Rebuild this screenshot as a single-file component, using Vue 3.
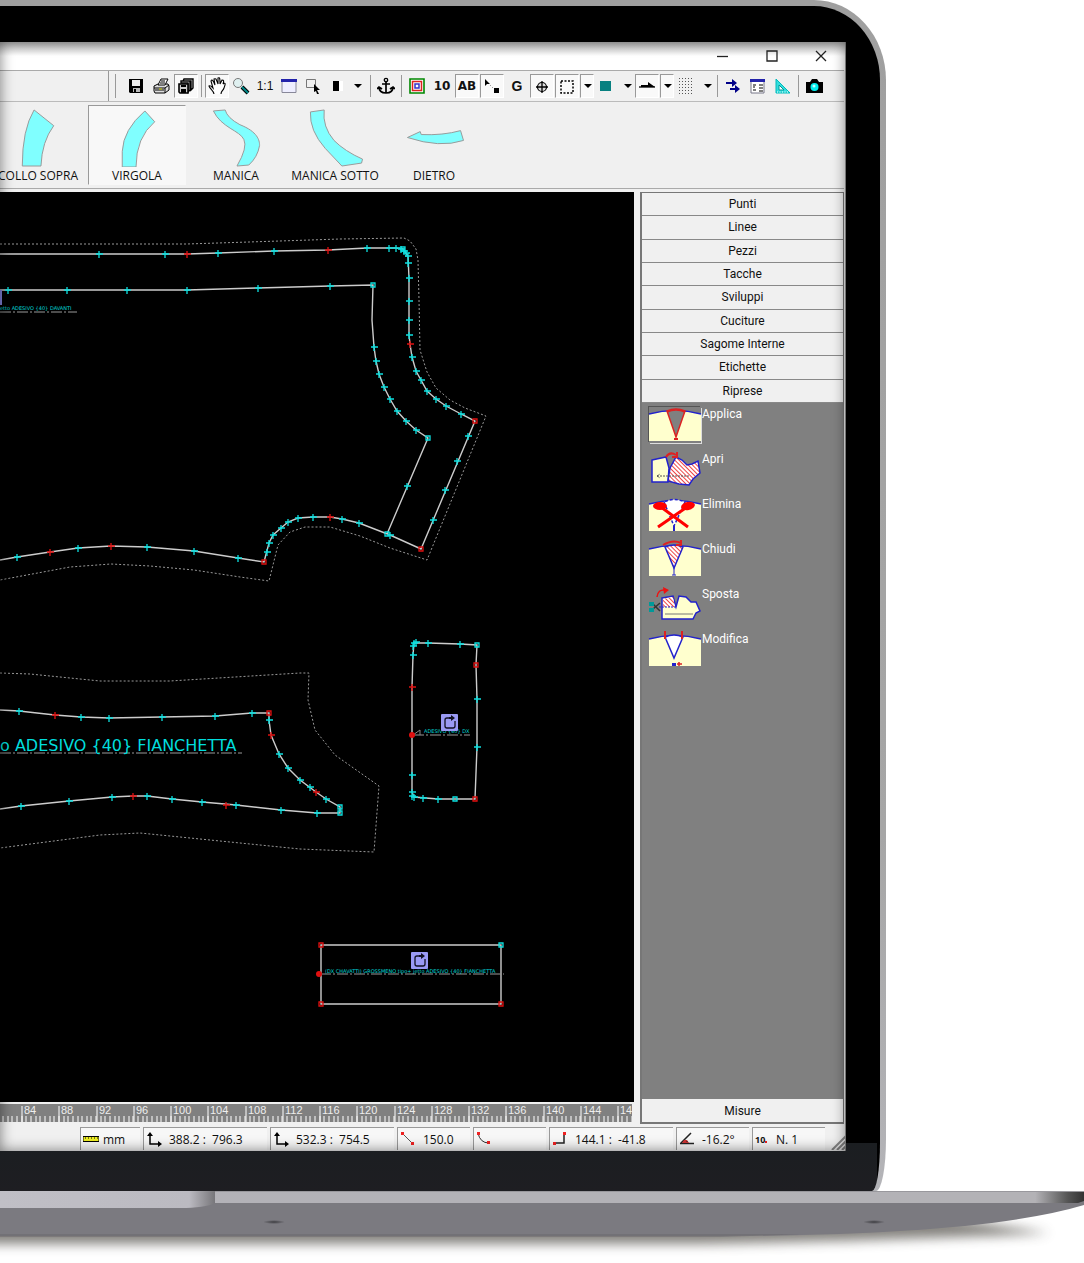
<script setup>
const caret = '<path d="M3 7h8l-4 4z"/>'

const toolGroups = [
  [
    { name: 'Salva', art: '<path d="M2 2h14v14H3l-1-1z"/><path fill="#eee" d="M5 3h8v6H5z"/><path fill="#bbb" d="M6 11h7v4H6z"/><path d="M7 12h2v3H7z"/>' },
    { name: 'Stampa', art: '<path fill="#ddd" stroke="#000" d="M2 9l4-2h10l1 2v4l-4 3H3l-1-2z"/><path fill="#fff" stroke="#000" d="M6 8l3-6h7l-3 6z"/><path stroke="#000" fill="none" d="M9 4h4M8 6h5M2 11h11l4-3M3 13h9M13 11v5"/><path stroke="#cc0" d="M7 12h3"/>' },
    { name: 'Salva tutto', on: true, art: '<path fill="#eee" stroke="#000" stroke-width="1.4" d="M7 2h9v9l-2 2V4H6zM4 4h9v9l-2 2V6H4z"/><path stroke="#000" stroke-width="1.6" fill="#ccc" d="M2 7h9v9H3l-1-1z"/><path d="M4 12h5v4H4zM4 8h5v2H4z"/>' },
  ],
  [
    { name: 'Sposta vista', on: true, art: '<path fill="#fff" stroke="#000" stroke-width="1.1" d="M6 17c0-3-4-5-5-8 1-1 2 0 4 2L3 4c1-2 2-1 4 4L6 2c2-1 2 0 4 5V1c2-1 2 1 2 6l2-4c2 0 2 1 1 4l1-1c2 0 1 2 0 5-1 3-3 3-3 6"/>' },
    { name: 'Zoom', art: '<circle cx="6" cy="6" r="4.5" fill="#dff0f0" stroke="#777"/><path stroke="#000" stroke-width="4" d="M10 10l6 6"/><path stroke="#088" stroke-width="2" d="M10 10l6 6"/>' },
    { name: 'Scala reale', text: '1:1', cls: 'plain' },
    { name: 'Finestra', art: '<path fill="#eef" stroke="#889" d="M2 2.500h14v13H2z"/><path fill="#22a" d="M1 2h16v3H1z"/>' },
    { name: 'Selezione', art: '<path fill="none" stroke="#777" d="M2.500 2.500h9v8h-9z"/><path d="M10 7l6 6h-3l2 4-2 0-1-3-2 1z"/>' },
    { name: 'Colore', art: '<path fill="#fff" d="M9 4h6v10H9z"/><path d="M5 4h6v10H5z"/>' },
    { name: 'Scegli colore', menu: true, wide: true },
  ],
  [
    { name: 'Ancora', art: '<circle cx="9" cy="3" r="1.700" fill="none" stroke="#000" stroke-width="1.300"/><path fill="none" stroke="#000" stroke-width="1.700" d="M9 4v12M5 7h8M2 10c0 4 3 6 7 6s7-2 7-6M0 12l2-2 3 2M13 12l3-2 2 2"/>' },
  ],
  [
    { name: 'Cornici', art: '<path fill="#fff" stroke="#080" stroke-width="1.600" d="M2 2h14v14H2z"/><path fill="none" stroke="#d22" stroke-width="1.500" d="M4.500 4.500h9v9h-9z"/><path fill="none" stroke="#33c" stroke-width="1.500" d="M7 7h4v4H7z"/>' },
    { name: 'Numeri', text: '10', cls: 'bold' },
    { name: 'Nomi', text: 'AB', cls: 'bold', on: true },
    { name: 'Nodi', on: true, art: '<path d="M2 2l5 5H4l-2 2zM11 11h5v5h-5z"/><path stroke="#777" stroke-dasharray="1 2" d="M7 8l4 4"/>' },
    { name: 'Griglia G', text: 'G', cls: 'gee' },
    { name: 'Centro', on: true, art: '<circle cx="9" cy="10" r="4.500" fill="#ddd" stroke="#000" stroke-width="1.200"/><path stroke="#000" stroke-width="1.300" d="M9 4v12M3 10h12"/>' },
    { name: 'Area', on: true, art: '<path fill="none" stroke="#000" stroke-width="1.500" stroke-dasharray="2 1.500" d="M3 4h12v12H3z"/>' },
    { name: 'Opzioni area', menu: true, on: true },
    { name: 'Riempimento', art: '<path fill="#078080" d="M2 4h11v10H2z"/>' },
    { name: 'Scegli riempimento', menu: true },
    { name: 'Linea', on: true, art: '<path stroke="#000" stroke-width="1.300" d="M1 10h16"/><path d="M3 8h7V5l7 5H3z"/>' },
    { name: 'Opzioni linea', menu: true, on: true },
    { name: 'Griglia', art: '<path stroke="#555" stroke-width="1" stroke-dasharray="1 2" d="M1.500 1v16M4.500 1v16M7.500 1v16M10.500 1v16M13.500 1v16"/>' },
    { name: 'Opzioni griglia', menu: true },
  ],
  [
    { name: 'Scambia', art: '<path fill="none" stroke="#008" stroke-width="2" d="M2 6h8M6 12h8"/><path fill="#008" d="M8 2l5 4-5 4zM11 8l5 4-5 4z"/>' },
    { name: 'Elenco', art: '<path fill="#fff" stroke="#778" d="M2 3h13v13H2z"/><path fill="#22a" d="M1 2h15v3H1z"/><path stroke="#555" stroke-width="1.300" d="M4 8h3M4 10h2M10 8h4M4 13h3M10 11h4M10 14h4"/>' },
    { name: 'Squadra', art: '<path fill="#3dd" stroke="#0bb" d="M2 2v14h14z"/><path fill="#fff" stroke="#099" d="M5 8v5h5z"/><path stroke="#fff" stroke-dasharray="1 1.500" d="M3 15h11"/>' },
  ],
  [
    { name: 'Foto', art: '<path d="M1 5h4l2-3h5l2 3h4v11H1z"/><circle cx="9.500" cy="10" r="4" fill="#0ee"/><circle cx="9" cy="9" r="1.500" fill="#bff"/>' },
  ],
]

const pieces = [
  { name: 'COLLO SOPRA', x: -11, d: 'M34 110L54 126Q42 142 41 167H22Q22 130 34 110z' },
  { name: 'VIRGOLA', x: 88, on: true, d: 'M145 111L155 122Q136 138 136 168H122V152Q123 130 145 111z' },
  { name: 'MANICA', x: 187, d: 'M213 111L225 110Q227 118 240 125C258 132 260 141 260 146Q258 158 249 166L237 167Q248 148 244 140C240 131 221 128 213 111z' },
  { name: 'MANICA SOTTO', x: 286, d: 'M310 112L324 110Q322 127 334 141Q345 152 363 160L362 164L342 167L325 149Q309 131 310 112z' },
  { name: 'DIETRO', x: 385, d: 'M407 138L420 132L421 135Q443 136 461 131L464 141Q440 149 407 138z' },
]

const menus = ['Punti', 'Linee', 'Pezzi', 'Tacche', 'Sviluppi', 'Cuciture', 'Sagome Interne', 'Etichette', 'Riprese']

const cloth = '<path fill="#ffffce" d="M0 7Q26 0 52 7V34H0z"/><path fill="none" stroke="#22c" stroke-width="1.500" d="M0 7Q26 0 52 7"/>'
const darts = [
  { name: 'Applica', on: true, art: cloth + '<path fill="#808080" stroke="#d22" stroke-width="1.500" d="M18 4l9 26L36 4Q27 0 18 4z"/><path fill="none" stroke="#d22" stroke-width="1.500" d="M18 5Q27 1 36 5"/><path fill="#d22" d="M25 31h4v2h-4z"/>' },
  { name: 'Apri', art: '<path fill="#ffffce" stroke="#22c" stroke-width="1.500" d="M3 8L17 5L20 16L19 30H3z"/><path fill="url(#hatch)" stroke="#22c" stroke-width="1.500" d="M21 16L27 5L33 8L38 13L43 12L49 9L51 21L44 27L40 33L30 32L19 29z"/><path stroke="#555" stroke-dasharray="2 1" d="M8 24h32M8 24l3-2M8 24l3 2"/><path fill="none" stroke="#d22" stroke-width="2" d="M17 5Q21-1 27 3M28 0v5h-5"/>' },
  { name: 'Elimina', art: cloth + '<path fill="#fff" stroke="#22c" stroke-width="1.500" stroke-dasharray="3 2" d="M15 5l10 24L36 5Q25 0 15 5z"/><path stroke="#f00" stroke-width="3" d="M9 30L38 10M39 30L12 10"/><ellipse cx="11" cy="9" rx="7" ry="4" fill="#f00"/><ellipse cx="39" cy="9" rx="7" ry="4" transform="rotate(-12 39 9)" fill="#f00"/><path fill="#22c" d="M24 29h2v5h-2z"/>' },
  { name: 'Chiudi', art: cloth + '<path fill="url(#hatch)" stroke="#22c" stroke-width="1.500" d="M16 5l9 21L34 5Q25 1 16 5z"/><path fill="none" stroke="#d22" stroke-width="2" d="M14 3Q24-3 32 1M32-2v5h-5"/><path stroke="#22c" d="M25 26v7M23 33h4"/>' },
  { name: 'Sposta', art: '<path fill="#ffffce" stroke="#22c" stroke-width="1.500" d="M13 11L24 9L27 20L30 9L37 10L42 15H47L51 24L47 26L44 32H13z"/><path fill="url(#hatch)" d="M14 12L24 10L26 20H14z"/><path stroke="#777" d="M16 27h28"/><path stroke="#22c" stroke-dasharray="2 1" d="M10 20h17"/><path fill="none" stroke="#e11" stroke-width="1.500" d="M8 10Q9 2 16 3"/><path fill="#e11" d="M14 0l6 3-5 4z"/><path stroke="#333" stroke-width="1.500" d="M4 22l7-6M4 17l7 7"/><path fill="#099" d="M0 15h5v4H0zM0 21h5v4H0z"/>' },
  { name: 'Modifica', art: cloth + '<path fill="#fff" stroke="#22c" stroke-width="1.500" d="M16 5l9 21L34 5Q25 1 16 5z"/><path stroke="#d22" stroke-width="2" d="M16-1v8M33-1v8"/><path stroke="#d22" stroke-width="1.500" d="M28 32h5M30 30v4"/><path fill="#22c" d="M23 31h4v3h-4z"/>' },
]

const axes = '<path stroke="#000" stroke-width="1.500" fill="none" d="M4 3v10h10"/><path d="M1 5l3-4 3 4zM12 10l4 3-4 3z"/>'
const readouts = [
  { size: 'unit', text: 'mm', art: '<path fill="#ee2" stroke="#000" d="M0 5.500h16v5H0z"/><path stroke="#000" stroke-dasharray="1 2" d="M2 7h13"/>' },
  { size: 'pair', text: '388.2 :  796.3', art: axes },
  { size: 'pair', text: '532.3 :  754.5', art: axes },
  { size: 'single', text: '150.0', art: '<path stroke="#555" d="M2 2l11 11"/><path fill="#e22" d="M1 1h3v3H1zM11 11h3v3h-3z"/>' },
  { size: 'single', text: '', art: '<path fill="none" stroke="#333" d="M2 2Q4 12 13 12"/><path fill="#e22" d="M1 1h3v3H1zM11 10h3v3h-3z"/>' },
  { size: 'pair', text: '144.1 :  -41.8', art: '<path fill="none" stroke="#222" stroke-width="1.500" d="M2 12h10V2"/><path fill="#e22" d="M1 11h3v3H1zM11 1h3v3h-3z"/>' },
  { size: 'single', text: '-16.2°', art: '<path stroke="#222" stroke-width="1.500" d="M2 12L12 2M1 12.500h14"/><path fill="#c33" d="M5 9l3 0 2 3H3z"/><path stroke="#222" stroke-dasharray="1 1" d="M8 10v3"/>' },
  { size: 'single', text: 'N. 1', mark: '10' },
]

const cross = pts => pts.map(([x, y]) => `M${x - 3} ${y}h7M${x} ${y - 3}v7`).join('')
const box = pts => pts.map(([x, y]) => `M${x - 2} ${y - 2}h4v4h-4z`).join('')

const cyanCross = cross([
  [99, 254], [165, 254], [218, 253], [274, 251], [367, 248], [389, 248], [396, 248], [401, 249], [404, 251], [406, 253], [408, 256], [408, 263],
  [409, 278], [409, 301], [409, 320], [409, 335], [412, 357], [416, 371], [421, 380], [427, 391], [436, 399], [446, 406], [461, 414],
  [468, 436], [457, 461], [445, 490], [433, 520], [390, 535], [359, 523], [342, 519], [313, 517], [298, 518], [288, 522], [281, 528],
  [273, 535], [269, 543], [267, 552], [238, 558], [194, 551], [147, 547], [78, 548], [17, 557],
  [8, 290], [67, 290], [127, 290], [187, 290], [258, 288], [330, 286], [374, 347], [376, 361], [379, 374], [384, 387], [390, 399],
  [397, 411], [406, 421], [416, 430], [407, 486],
  [19, 711], [81, 717], [109, 718], [162, 717], [215, 716], [252, 713], [269, 720], [279, 754], [288, 768], [300, 780], [310, 787],
  [326, 799], [317, 813], [281, 810], [236, 805], [202, 802], [172, 799], [147, 796], [112, 797], [69, 801], [21, 806],
  [414, 643], [416, 642], [428, 643], [460, 644], [477, 699], [477, 747], [438, 799], [423, 798], [414, 797], [412, 796], [412, 792],
  [412, 775], [413, 655], [413, 646],
])
const redCross = cross([
  [187, 254], [328, 250], [410, 344], [330, 517], [111, 546], [50, 552], [55, 715], [271, 735], [316, 792], [226, 805], [133, 796], [412, 687],
])
const cyanBox = box([[373, 285], [428, 438], [387, 534], [403, 249], [340, 807], [340, 813], [477, 645], [455, 799], [501, 945]])
const redBox = box([[475, 421], [421, 549], [264, 562], [269, 713], [476, 665], [475, 799], [321, 945], [321, 1004], [501, 1004]])

const step = 149 / 4
const marks = Array.from({ length: 17 }, (_, i) => ({ x: Math.round(22 + i * step), label: 84 + i * 4 }))
const ticks = Array.from({ length: 140 }, (_, i) => `M${Math.round(3 + (i * step) / 8)} 12v6`).join('')
</script>

<template>
  <div class="page">
    <div class="lid">
      <div class="bezel">
        <main class="screen">
          <header class="titlebar">
            <button aria-label="Riduci"><svg viewBox="0 0 12 12"><path d="M0 6.500h11" /></svg></button>
            <button aria-label="Ingrandisci"><svg viewBox="0 0 12 12"><path d="M1 1h10v10H1z" /></svg></button>
            <button aria-label="Chiudi"><svg viewBox="0 0 12 12"><path d="M1 1l10 10M11 1L1 11" /></svg></button>
          </header>

          <div class="toolbar">
            <div class="dock"></div>
            <div class="tools">
              <div v-for="(group, g) in toolGroups" :key="g" class="group" :class="{ tight: g === 1 }">
                <button
                  v-for="t in group"
                  :key="t.name"
                  :aria-label="t.name"
                  :class="[t.cls, { on: t.on, menu: t.menu, wide: t.wide }]"
                >
                  <template v-if="t.text">{{ t.text }}</template>
                  <svg v-else-if="t.menu" class="arrow" viewBox="0 0 14 18" v-html="caret"></svg>
                  <svg v-else viewBox="0 0 18 18" v-html="t.art"></svg>
                </button>
              </div>
            </div>
          </div>

          <nav class="pieces">
            <button v-for="p in pieces" :key="p.name" :class="{ on: p.on }">
              <svg :viewBox="`${p.x} 108 98 60`"><path :d="p.d" /></svg>
              <span>{{ p.name }}</span>
            </button>
          </nav>

          <div class="work">
            <section class="left">
              <svg class="canvas" viewBox="0 192 634 910" preserveAspectRatio="xMaxYMin meet">
                <g class="seam">
                  <path d="M0 244L187 244L280 241L340 239L404 238L410 241L416 249L418 260L419 300L420 350L427 372L436 388L450 400L465 408L486 416L427 560L390 548L360 536L330 527L305 527L290 532L278 545L269 581L240 577L194 570L150 566L111 564L70 567L0 580" />
                  <path d="M0 673L30 674L100 681L170 681L300 673H309L308 700L315 730L335 755L379 786L374 852L300 849L200 839L140 833L100 835L0 848" />
                </g>
                <g class="edge">
                  <path d="M0 254H187L218 253L274 251L328 250L367 248H396L403 249L408 256L409 278V335L410 344L412 357L416 371L421 380L427 391L436 399L446 406L461 414L475 421L421 549L390 535L359 523L342 519L330 517H313L298 518L288 522L281 528L273 535L269 543L264 562L238 558L194 551L147 547L111 546L78 548L50 552L17 557L0 560" />
                  <path d="M0 290H187L258 288L330 286L373 285L372 320L374 347L376 361L379 374L384 387L390 399L397 411L406 421L416 430L428 438L387 534" />
                  <path d="M0 710L19 711L55 715L81 717L109 718L162 717L215 716L252 713H269V720L271 735L279 754L288 768L300 780L316 792L326 799L340 807V813H317L281 810L236 805L202 802L172 799L147 796H133L112 797L69 801L21 806L0 809" />
                  <path d="M414 643L428 643L460 644L477 645L476 665L477 699V747L475 799H438L414 797L412 792V687L413 655z" />
                  <path d="M321 945H501V1004H321z" />
                </g>
                <g class="grain">
                  <path d="M0 312H77M0 753H242M413 735H470M320 974H504" />
                </g>
                <path class="grain-head" d="M413 735L420 730V735" />
                <g class="label">
                  <text x="0" y="310" class="tiny">etto  ADESIVO  {40}  DAVANTI</text>
                  <text x="0" y="751" class="big">o ADESIVO {40} FIANCHETTA</text>
                  <text x="424" y="733" class="tiny">ADESIVO {40} DX</text>
                  <text x="325" y="973" class="tiny">(DX CHAVATTI)  GROSSMENO  tipo+  jetto  ADESIVO  {40}  FIANCHETTA</text>
                </g>
                <path class="cyan" :d="cyanCross" />
                <path class="cyan" :d="cyanBox" />
                <path class="red" :d="redCross" />
                <path class="red" :d="redBox" />
                <circle cx="412" cy="735" r="3" fill="#e01010" />
                <circle cx="319" cy="974" r="3" fill="#e01010" />
                <path fill="#8080d8" d="M0 290h2v15H0z" />
                <g v-for="b in [[441, 714], [411, 952]]" :key="b[0]" :transform="`translate(${b[0]} ${b[1]})`">
                  <rect width="17" height="17" rx="1" fill="#9a9af4" />
                  <path fill="none" stroke="#112" stroke-width="1.300" d="M9 4H6Q4 4 4 6v6q0 2 2 2h6q2 0 2-2V7" />
                  <path fill="#112" d="M8 3h2V1l4 3-4 3V5H8z" />
                </g>
              </svg>
              <svg class="ruler" viewBox="0 0 632 18" preserveAspectRatio="xMinYMin slice">
                <path :d="ticks" />
                <g v-for="m in marks" :key="m.label">
                  <path :d="`M${m.x} 2v16`" />
                  <text :x="m.x + 2" y="10">{{ m.label }}</text>
                </g>
              </svg>
            </section>

            <aside class="side">
              <div class="menus">
                <button v-for="m in menus" :key="m">{{ m }}</button>
              </div>
              <div class="darts">
                <button v-for="d in darts" :key="d.name" :class="{ on: d.on }">
                  <svg viewBox="0 0 52 36" v-html="d.art"></svg>
                  <span>{{ d.name }}</span>
                </button>
              </div>
              <button class="measures">Misure</button>
              <svg class="defs" width="0" height="0" aria-hidden="true">
                <pattern id="hatch" width="3" height="3" patternUnits="userSpaceOnUse" patternTransform="rotate(-45)">
                  <rect width="3" height="3" fill="#fff" />
                  <rect width="1" height="3" fill="#e44" />
                </pattern>
              </svg>
            </aside>
          </div>

          <footer class="status">
            <div v-for="(r, i) in readouts" :key="i" class="cell" :class="r.size">
              <b v-if="r.mark">{{ r.mark }}<i></i></b>
              <svg v-else viewBox="0 0 16 16" v-html="r.art"></svg>
              <span>{{ r.text }}</span>
            </div>
            <svg class="grip" viewBox="0 0 15 15"><path d="M1 15L15 1M6 15L15 6M11 15L15 11" /></svg>
          </footer>
        </main>
      </div>
    </div>

    <svg class="base" viewBox="0 0 1084 72" preserveAspectRatio="none">
      <defs>
        <linearGradient id="deck">
          <stop offset="0" stop-color="#b3b2b8" />
          <stop offset="0.955" stop-color="#b3b2b6" />
          <stop offset="0.985" stop-color="#555" />
          <stop offset="1" stop-color="#333" />
        </linearGradient>
        <linearGradient id="notch">
          <stop offset="0" stop-color="#c0bfc6" />
          <stop offset="0.880" stop-color="#bbbac1" />
          <stop offset="1" stop-color="#77767a" />
        </linearGradient>
        <radialGradient id="foot">
          <stop offset="0" stop-color="#3c3c40" />
          <stop offset="1" stop-color="#7b7a80" />
        </radialGradient>
        <filter id="soft" x="-10%" y="-60%" width="120%" height="250%"><feGaussianBlur stdDeviation="6" /></filter>
      </defs>
      <path filter="url(#soft)" fill="#777570" opacity="0.900" d="M-40 20H900L1050 42Q900 49 700 53H-40z" />
      <path fill="#7b7a80" d="M0 10H1084V14Q985 44 720 45H0z" />
      <path fill="#69686c" d="M0 43H800Q760 45 720 46H0z" opacity="0.500" />
      <path fill="url(#deck)" d="M0 0H1084V10L1078 12H0z" />
      <path fill="#99989d" d="M0 0H1084V1H0z" />
      <path fill="url(#notch)" d="M0 0H215V12Q205 17 180 17H0z" />
      <ellipse cx="274" cy="31" rx="11" ry="2" fill="url(#foot)" />
      <ellipse cx="874" cy="31" rx="11" ry="2" fill="url(#foot)" />
    </svg>
  </div>
</template>

<style>
body {
  margin: 0;
  background: #fff;
}
</style>

<style scoped>
.page {
  display: flex;
  flex-direction: column;
  overflow: hidden;
  font-family: "Open Sans", "Noto Sans", sans-serif;
  font-size: 12px;
  color: #111;
}
button {
  appearance: none;
  margin: 0;
  padding: 0;
  border: 0;
  background: none;
  font: inherit;
  color: inherit;
}
svg {
  display: block;
}
.lid {
  margin-right: 198px;
  padding: 6px 6px 0 0;
  background: linear-gradient(#9f9f9f, #a6a6a6 70%, #b4b4b8);
  border-radius: 0 72px 10px 0 / 0 80px 52px 0;
}
.bezel {
  padding: 36px 34px 40px 0;
  background: linear-gradient(#1b1e21, #1e1e22) left bottom / calc(100% - 3px) 48px no-repeat, #000;
  border-radius: 0 66px 8px 0 / 0 74px 48px 0;
}
.screen {
  position: relative;
  display: flex;
  flex-direction: column;
  background: #f0f0f0;
}
.screen::after {
  content: "";
  position: absolute;
  inset: 0;
  pointer-events: none;
  box-shadow: inset 0 0 14px rgba(0, 0, 0, 0.5), inset -1px 0 0 #999;
}
.titlebar {
  display: flex;
  justify-content: flex-end;
  gap: 25px;
  height: 28px;
  padding-right: 13px;
  background: linear-gradient(#bbb, #fff 14px);
}
.titlebar button {
  display: grid;
  place-items: center;
  width: 24px;
}
.titlebar svg {
  width: 12px;
  height: 12px;
  fill: none;
  stroke: #222;
  stroke-width: 1.3;
}
.toolbar {
  display: flex;
  gap: 2px;
  height: 30px;
  margin-right: 2px;
  border-top: 1px solid #aaa;
  border-bottom: 1px solid #bbb;
}
.dock {
  width: 108px;
  border-right: 1px solid #999;
}
.tools {
  display: flex;
  flex: 1;
  margin: 3px 0;
  padding-left: 8px;
  margin-left: 4px;
  border-left: 1px solid #999;
}
.group {
  display: flex;
  gap: 1px;
}
.group.tight {
  gap: 0;
}
.group + .group::before {
  content: "";
  flex: none;
  width: 1px;
  margin: 1px 3px;
  background: #999;
}
.group + .group:not(.tight)::before {
  margin-right: 2px;
}
.group button {
  display: grid;
  place-items: center;
  box-sizing: border-box;
  width: 24px;
  height: 24px;
  border: 1px solid transparent;
}
.group button.menu {
  width: 14px;
}
.group button.wide {
  width: 18px;
}
.group button.on {
  background: #f9f9f9;
  border-color: #999 #fff #fff #999;
}
.group svg {
  width: 18px;
  height: 18px;
}
.group svg.arrow {
  width: 14px;
}
.plain {
  font-family: "Liberation Sans", sans-serif;
}
.bold {
  font-family: "DejaVu Sans", sans-serif;
  font-weight: 700;
}
.gee {
  font-family: "Liberation Sans", sans-serif;
  font-size: 14px;
  font-weight: 700;
}
.pieces {
  display: flex;
  gap: 1px;
  height: 86px;
  margin-right: 2px;
  border-bottom: 1px solid #aaa;
  overflow: hidden;
}
.pieces button {
  display: flex;
  flex: none;
  flex-direction: column;
  align-items: center;
  box-sizing: border-box;
  width: 98px;
  margin-bottom: 3px;
  padding-top: 5px;
  border: 1px solid transparent;
  white-space: nowrap;
}
.pieces button:first-child {
  margin-left: -11px;
}
.pieces button.on {
  margin-top: 3px;
  padding-top: 2px;
  background: #f8f8f8;
  border-color: #999 transparent transparent #999;
}
.pieces svg {
  width: 98px;
  height: 60px;
  margin-bottom: 1px;
  fill: #80ffff;
  stroke: #999;
}
.pieces span {
  line-height: 16px;
}
.work {
  display: flex;
  gap: 6px;
  padding-right: 2px;
  margin-top: 3px;
}
.left {
  flex: 1;
  min-width: 0;
  padding-bottom: 2px;
}
.canvas {
  width: 100%;
  background: #000;
}
.seam {
  fill: none;
  stroke: #999;
  stroke-dasharray: 2 2;
}
.edge {
  fill: none;
  stroke: #ccc;
  stroke-width: 1.4;
}
.grain {
  stroke: #999;
  stroke-dasharray: 11 2 2 2;
}
.grain-head {
  fill: none;
  stroke: #888;
}
.cyan {
  fill: none;
  stroke: #0de0e0;
  stroke-width: 1.3;
}
.red {
  fill: none;
  stroke: #e01010;
  stroke-width: 1.3;
}
.label {
  fill: #0dd;
  font-family: "DejaVu Sans", sans-serif;
  white-space: pre;
}
.tiny {
  font-size: 5px;
}
.big {
  font-size: 16px;
}
.ruler {
  width: calc(100% - 2px);
  height: 18px;
  margin-top: 2px;
  background: #808080;
  stroke: #fff;
}
.ruler text {
  fill: #eee;
  stroke: none;
  font-family: "Liberation Sans", sans-serif;
  font-size: 11px;
}
.side {
  display: flex;
  flex-direction: column;
  flex: none;
  box-sizing: border-box;
  width: 204px;
  border: 2px solid #777;
  border-width: 1px 1px 2px 2px;
  background: #808080;
  font-family: Roboto, "Liberation Sans", sans-serif;
}
.menus {
  display: grid;
  grid-auto-rows: 1fr;
  height: 210px;
}
.menus button,
.measures {
  background: #f0f0f0;
  border-bottom: 1px solid #888;
}
.darts {
  display: flex;
  flex: 1;
  flex-direction: column;
  gap: 9px;
  padding: 4px 7px;
}
.darts button {
  display: flex;
  gap: 1px;
  height: 36px;
  color: #fff;
}
.darts svg {
  width: 52px;
  height: 36px;
  overflow: visible;
}
.darts .on svg {
  box-shadow: 1px 1px 0 #ddd, -1px -1px 0 #555;
}
.darts span {
  line-height: 14px;
}
.measures {
  height: 23px;
  border-bottom: 0;
}
.defs {
  position: absolute;
}
.status {
  display: flex;
  gap: 3px;
  height: 23px;
  margin-top: 3px;
  padding: 0 0 1px 80px;
}
.cell {
  display: flex;
  align-items: center;
  gap: 7px;
  box-sizing: border-box;
  padding-left: 2px;
  border-top: 1px solid #999;
  border-left: 1px solid #999;
  background: #f7f7f7;
  white-space: pre;
}
.cell svg {
  width: 16px;
  height: 16px;
}
.cell b {
  display: flex;
  align-items: center;
  width: 14px;
  font-size: 9px;
}
.cell i {
  width: 2px;
  height: 2px;
  margin-top: 6px;
  background: #e22;
}
.unit {
  width: 60px;
  gap: 4px;
}
.pair {
  width: 124px;
}
.single {
  width: 73px;
}
.grip {
  width: 15px;
  height: 15px;
  margin: auto 0 0 auto;
  stroke: #888;
  stroke-width: 2;
}
.base {
  width: 100%;
  height: 72px;
}
</style>
